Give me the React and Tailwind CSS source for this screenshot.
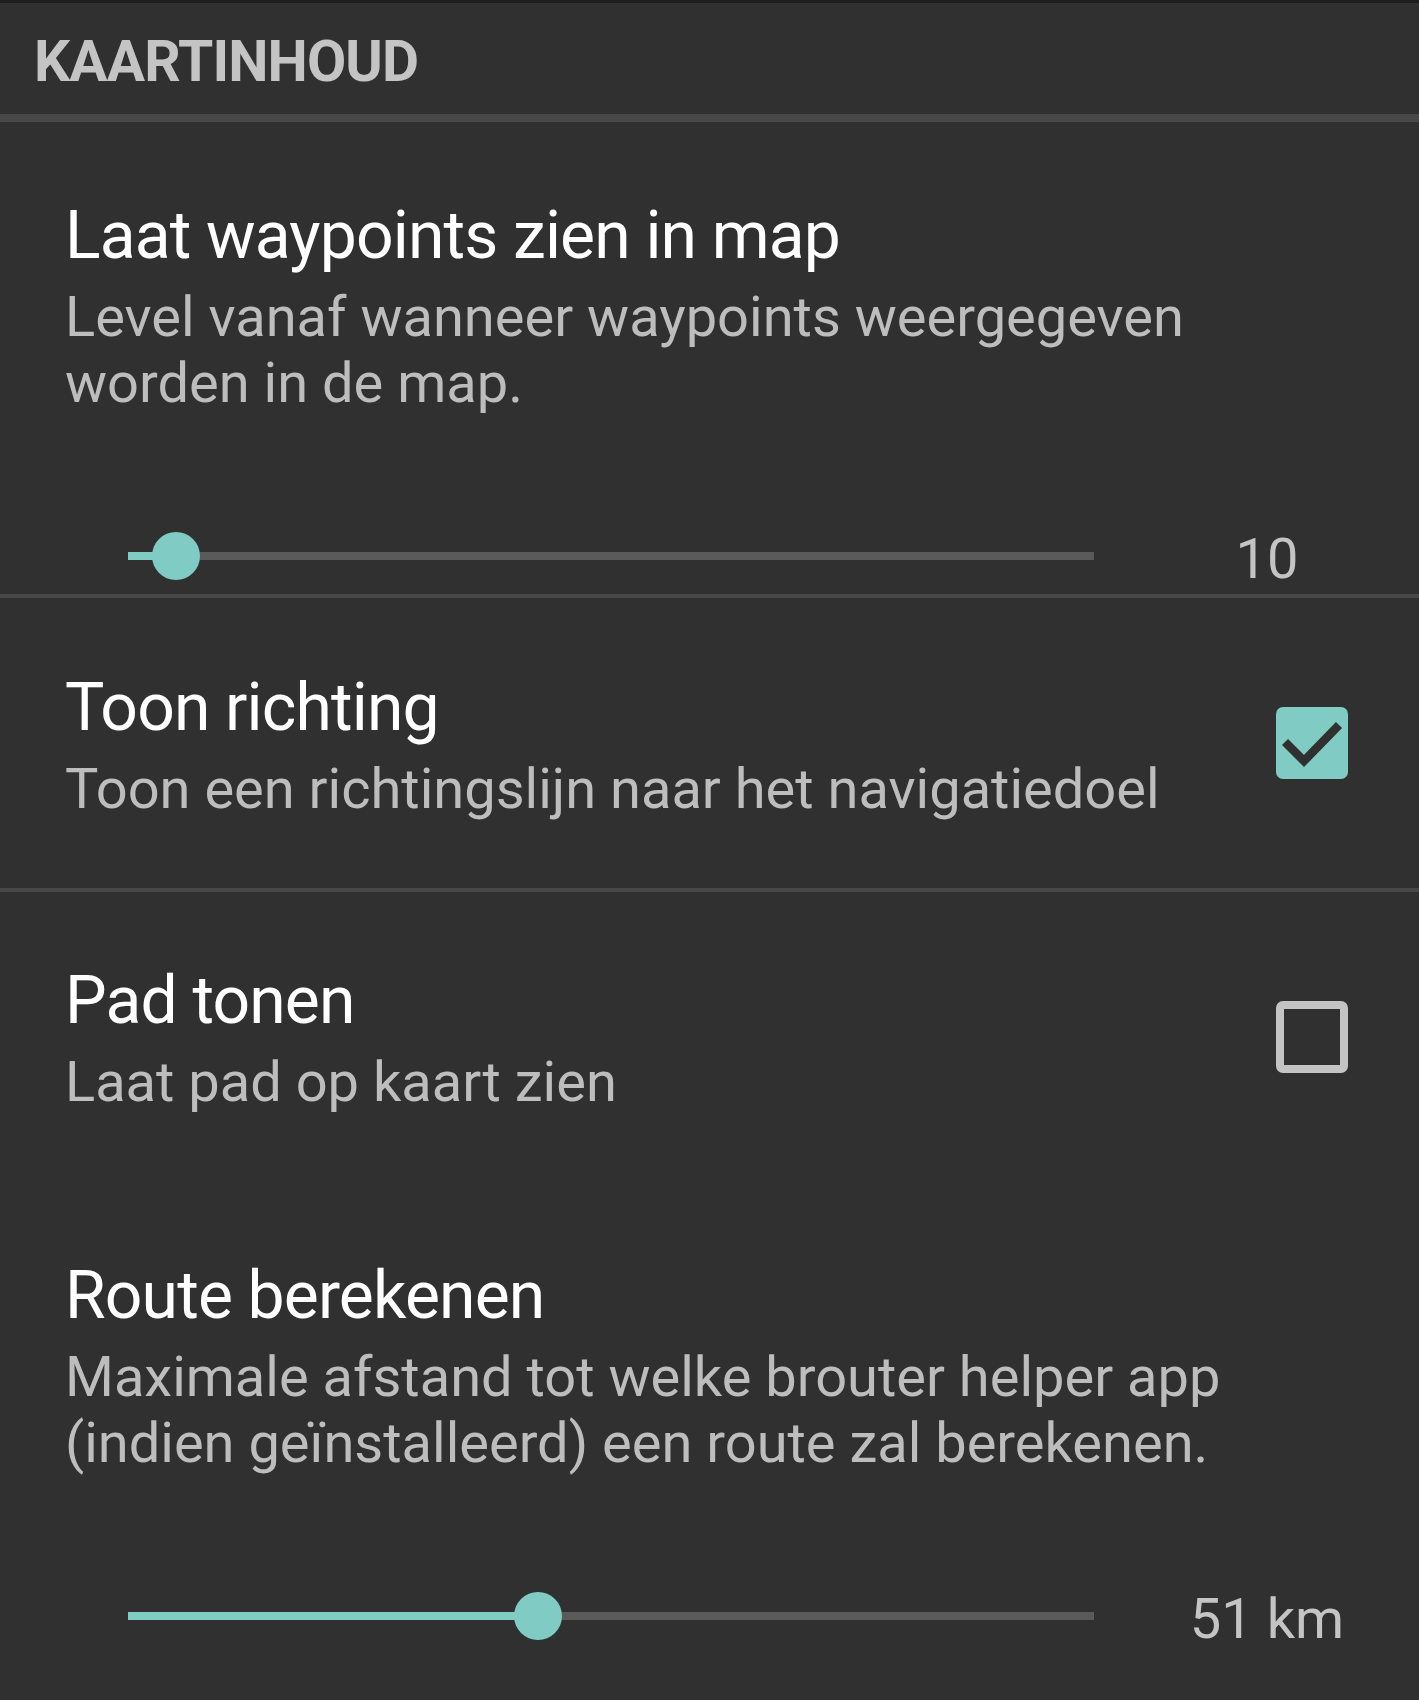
import React from 'react';

const font = { fontFamily: 'Roboto, "Noto Sans", sans-serif' };

function Slider({ pos, value }) {
  return (
    <div className="flex items-center h-[48px]">
      <div className="relative ml-[128px] w-[966px] h-[8px] bg-[#5a5a5a]">
        <div className="absolute left-0 top-0 h-[8px] bg-[#80cbc4]" style={{ width: pos }} />
        <div
          className="absolute top-[-20px] w-[48px] h-[48px] rounded-full bg-[#80cbc4]"
          style={{ left: pos - 24 }}
        />
      </div>
      <div className="ml-[76px] w-[194px] text-center text-[56px] leading-[48px] pt-[6px] text-[#c4c4c4]">
        {value}
      </div>
    </div>
  );
}

function Checkbox({ checked }) {
  if (checked) {
    return (
      <div className="w-[72px] h-[72px] rounded-[7px] bg-[#80cbc4] shrink-0">
        <svg width="72" height="72" viewBox="0 0 72 72">
          <path d="M9 35 L28 54 L63 18" fill="none" stroke="#303030" strokeWidth="8.5" />
        </svg>
      </div>
    );
  }
  return <div className="w-[72px] h-[72px] rounded-[7px] border-[8px] border-[#c4c4c4] shrink-0" />;
}

function Texts({ title, lines }) {
  return (
    <div>
      <div className="text-[66px] leading-[80px] tracking-[-0.85px] text-white">{title}</div>
      <div className="mt-[8px] text-[56px] leading-[66px] text-[#bdbdbd]">
        {lines.map((l, i) => (
          <div key={i}>{l}</div>
        ))}
      </div>
    </div>
  );
}

export default function App() {
  return (
    <div className="w-[1419px] h-[1700px] bg-[#303030] overflow-hidden" style={font}>
      <div className="h-[3px] bg-[#1e1e1e]" />
      <div className="h-[111px] pl-[34px] pt-[26px]">
        <div className="text-[57px] leading-[66px] font-bold tracking-[-0.9px] text-[#c4c4c4]">KAARTINHOUD</div>
      </div>
      <div className="h-[8px] bg-[#484848]" />

      {/* waypoints */}
      <div className="h-[472px] pt-[74px] pl-[65px]">
        <Texts
          title="Laat waypoints zien in map"
          lines={['Level vanaf wanneer waypoints weergegeven', 'worden in de map.']}
        />
      </div>
      <div className="relative">
        <div className="absolute left-0 top-[-62px] w-full">
          <Slider pos={48} value="10" />
        </div>
      </div>
      <div className="h-[4px] bg-[#484848]" />

      {/* richting */}
      <div className="h-[290px] pt-[70px] pl-[65px] pr-[71px] flex justify-between">
        <Texts title="Toon richting" lines={['Toon een richtingslijn naar het navigatiedoel']} />
        <div className="pt-[39px]">
          <Checkbox checked />
        </div>
      </div>
      <div className="h-[4px] bg-[#484848]" />

      {/* pad */}
      <div className="h-[294px] pt-[69px] pl-[65px] pr-[71px] flex justify-between">
        <Texts title="Pad tonen" lines={['Laat pad op kaart zien']} />
        <div className="pt-[40px]">
          <Checkbox checked={false} />
        </div>
      </div>

      {/* route */}
      <div className="pt-[70px] pl-[65px]">
        <Texts
          title="Route berekenen"
          lines={['Maximale afstand tot welke brouter helper app', '(indien geïnstalleerd) een route zal berekenen.']}
        />
      </div>
      <div className="mt-[116px]">
        <Slider pos={410} value="51 km" />
      </div>
    </div>
  );
}
